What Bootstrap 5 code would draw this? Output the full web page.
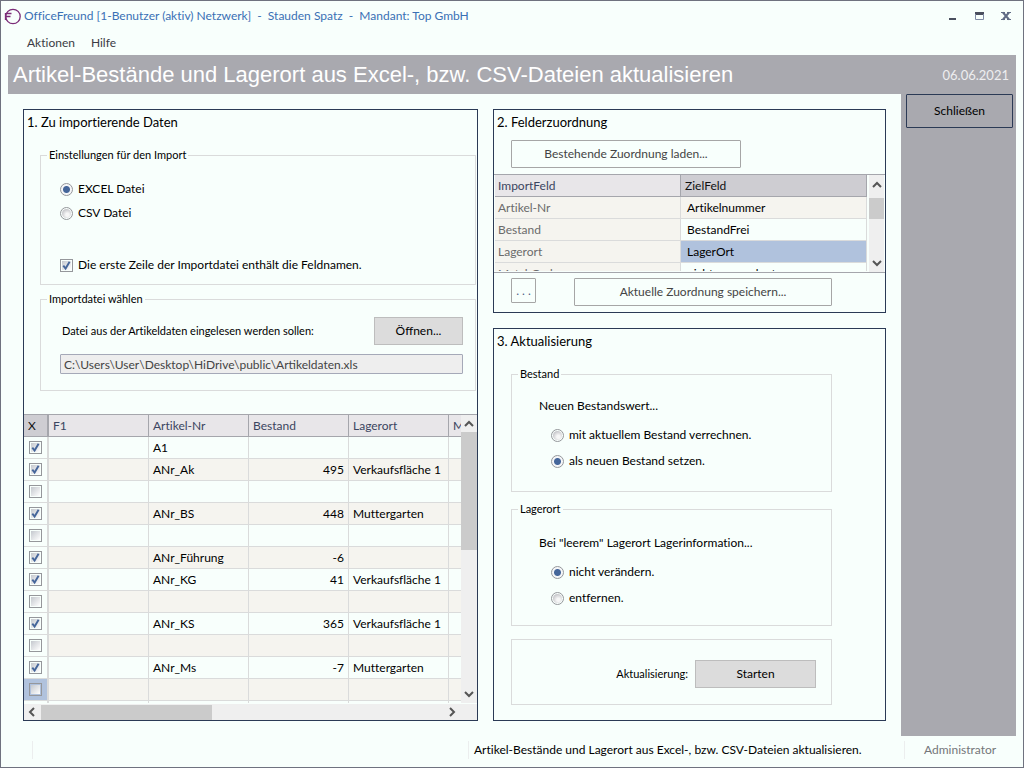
<!DOCTYPE html>
<html lang="de">
<head>
<meta charset="utf-8">
<meta name="viewport" content="width=device-width, initial-scale=1">
<title>OfficeFreund</title>
<link rel="stylesheet" href="https://cdn.jsdelivr.net/npm/bootstrap@5.3.0/dist/css/bootstrap.min.css">
<style>
:root { --paper:#f8fffc; --steel:#a9a9af; --navy:#2b3a55; --line:#dadbdb; --edge:#a5a6ac; --stripe:#f5f4ef; --head:#e8e6e9; --head-on:#cecdd2; --pick:#b0c2dd; }
body { font-family:Lato,"Open Sans","Noto Sans",sans-serif; font-variant-ligatures:none; font-size:12px; line-height:16px; color:#000; background:var(--paper); }
.window { height:100vh; min-height:768px; border:1px solid #6f727f; }
.titlebar { height:30px; padding:0 11px 0 3px; color:#3a70b5; }
.caption-btn { border:0; background:none; padding:0; width:12px; height:12px; line-height:0; }
.menubar { height:24px; padding-left:26px; gap:16px; }
.menubar a { color:#3b3b44; text-decoration:none; }
.banner { height:39px; background:var(--steel); color:#fff; margin:0 7px; padding:0 7px 0 5px; }
.banner h1 { font:22px/24px "Liberation Sans",Arial,sans-serif; margin:0; }
.banner time { color:#eeeef0; font-size:13px; }
.workspace { margin:0 7px; min-height:0; }
.panels { display:grid; grid-template-columns:455fr 393fr; gap:15px; padding:15px; min-width:0; min-height:0; }
.panel { border:1px solid var(--navy); min-width:0; min-height:0; }
.panel h2 { font-size:13px; font-weight:400; line-height:16px; margin:0; padding:4px 3px 0; }
.sidebar { flex:none; width:115px; background:var(--steel); padding:0 3px 0 5px; }
.group { border:1px solid var(--line); }
.group legend { float:none; width:auto; font-size:11px; line-height:16px; margin:0 0 0 6px; padding:0 2px; }
.tight { font-size:11px; }
.win-btn { border:1px solid #a6a6a6; border-radius:1px; background:none; color:#444; height:28px; padding:0; line-height:16px; }
.win-btn.solid { background:#dcdcdc; border-color:#bdbdbd; border-radius:0; color:#000; }
.win-btn.side { border-color:var(--navy); height:34px; color:#000; }
.path-box { height:20px; border:1px solid #a5a9b8; border-radius:1px; background:#eee; color:#444; padding:0 3px; width:100%; }
.opt { display:flex; align-items:center; gap:5px; height:24px; }
.opt.tall { height:26px; padding-left:12px; }
input[type=radio], input[type=checkbox] { appearance:none; width:13px; height:13px; flex:none; margin:0; border:1px solid #95979b; background:linear-gradient(135deg,#c4c8ce,#fff) content-box #f3f3f3; padding:1px; }
input[type=radio] { border-radius:50%; background:radial-gradient(circle at 60% 65%,#f7f7f7 20%,#c4c4c8 75%) content-box #f3f3f3; }
input[type=radio]:checked { background:radial-gradient(circle,#45669a 0 3px,#f5f6f8 4px); }
input[type=checkbox]:checked { background:url("data:image/svg+xml,%3Csvg xmlns='http://www.w3.org/2000/svg' viewBox='0 0 11 11'%3E%3Cpath d='M2.3 5.6L4.6 8.6L8.6 1.8' fill='none' stroke='%2345669a' stroke-width='1.9'/%3E%3C/svg%3E") border-box center/11px no-repeat, linear-gradient(135deg,#c4c8ce,#fff) content-box #f3f3f3; }
.sheet { border-collapse:separate; border-spacing:0; table-layout:fixed; width:100%; }
.sheet th, .sheet td { height:22px; padding:0 4px; border:0 solid var(--line); border-width:0 1px 1px 0; white-space:nowrap; overflow:hidden; line-height:16px; }
.sheet th { font-weight:400; background:var(--head); border-color:var(--edge); color:#3b4560; text-align:left; }
.sheet th.on { background:var(--head-on); color:#111; }
.import-sheet { width:525px; }
.import-sheet tbody tr:nth-child(even) td { background:var(--stripe); }
.import-sheet td:first-child, .import-sheet th:first-child { border-right-width:2px; }
.import-sheet td:first-child { background:var(--paper) !important; line-height:0; padding:0 5px; }
.import-sheet td.picked { background:var(--pick) !important; }
.num { text-align:right; }
.data-area { border-top:1px solid var(--edge); display:grid; grid-template-columns:minmax(0,1fr) 16px; }
.import-area { grid-template-rows:minmax(0,1fr) 17px; flex:1 1 0; min-height:0; margin-top:23px; }
.map-area { grid-template-columns:minmax(0,1fr) 18px; height:99px; border-bottom:1px solid var(--edge); margin-top:6px; padding-left:1px; }
.map-area td:first-child { background:var(--stripe); color:#6b6b6b; padding-left:3px; }
.map-area th:first-child { padding-left:3px; }
.map-area td:last-child { padding-left:6px; }
.vbar, .hbar { background:#efefef; display:flex; align-items:center; }
.vbar { flex-direction:column; }
.hbar { margin-top:1px; }
.vbar svg, .hbar svg { flex:none; }
.thumb { background:#cbcbcb; }
.statusbar { height:31px; margin:0 7px; padding-bottom:4px; }
.statusbar .seg { border-left:1px solid #eceeee; height:18px; line-height:18px; }
</style>
</head>
<body>
<div class="window d-flex flex-column">
  <header class="titlebar d-flex align-items-center">
    <svg width="17" height="17" viewBox="0 0 17 17" fill="none" stroke="#7b2c78" aria-hidden="true"><circle cx="9" cy="8.500" r="7.200" stroke-width="1.300"/><path d="M2 5.500H7.500M1 8.500H6.500M1.500 5V12" stroke-width="1.300"/></svg>
    <span class="me-auto" style="white-space:pre;margin-left:3px">OfficeFreund [1-Benutzer (aktiv) Netzwerk]  -  Stauden Spatz  -  Mandant: Top GmbH</span>
    <div class="d-flex" style="gap:15px">
      <button class="caption-btn" aria-label="Minimieren"><svg width="12" height="12"><path d="M3 9h7" stroke="#4a4f5e" stroke-width="2"/></svg></button>
      <button class="caption-btn" aria-label="Maximieren"><svg width="12" height="12"><path d="M2 3.500h9" stroke="#4a4f5e" stroke-width="3"/><path d="M2.500 4v5.500h8V4" fill="none" stroke="#7f8aa5"/></svg></button>
      <button class="caption-btn" aria-label="Fenster schließen"><svg width="12" height="12"><path d="M3 2.500l6 7M9 2.500l-6 7" stroke="#606b85" stroke-width="2"/><path d="M1 2.500h4M7 2.500h4M1 9.500h4M7 9.500h4" stroke="#606b85"/></svg></button>
    </div>
  </header>
  <nav class="menubar d-flex align-items-center"><a href="#">Aktionen</a><a href="#">Hilfe</a></nav>
  <div class="banner d-flex align-items-center justify-content-between">
    <h1>Artikel-Bestände und Lagerort aus Excel-, bzw. CSV-Dateien aktualisieren</h1>
    <time datetime="2021-06-06">06.06.2021</time>
  </div>

  <div class="workspace d-flex flex-fill">
    <main class="panels flex-fill">
      <section class="panel d-flex flex-column">
        <h2>1. Zu importierende Daten</h2>
        <fieldset class="group" style="margin:17px 1px 0 16px">
          <legend>Einstellungen für den Import</legend>
          <div style="padding:14px 19px 7px">
            <label class="opt"><input type="radio" name="src" checked>EXCEL Datei</label>
            <label class="opt"><input type="radio" name="src">CSV Datei</label>
            <label class="opt" style="margin-top:28px"><input type="checkbox" checked>Die erste Zeile der Importdatei enthält die Feldnamen.</label>
          </div>
        </fieldset>
        <fieldset class="group" style="margin:6px 1px 0 16px">
          <legend>Importdatei wählen</legend>
          <div style="padding:10px 12px 16px 19px">
            <div class="d-flex align-items-center justify-content-between">
              <label for="path" class="tight" style="padding-left:2px">Datei aus der Artikeldaten eingelesen werden sollen:</label>
              <button class="win-btn solid" style="width:89px">Öffnen...</button>
            </div>
            <input id="path" class="path-box d-block" style="margin-top:9px" value="C:\Users\User\Desktop\HiDrive\public\Artikeldaten.xls" readonly>
          </div>
        </fieldset>
        <div class="data-area import-area">
          <div class="overflow-hidden">
            <table class="sheet import-sheet">
              <colgroup><col style="width:25px"><col style="width:100px"><col style="width:100px"><col style="width:100px"><col style="width:100px"><col style="width:100px"></colgroup>
              <thead><tr><th class="on">X</th><th>F1</th><th>Artikel-Nr</th><th>Bestand</th><th>Lagerort</th><th>M</th></tr></thead>
              <tbody>
                <tr><td><input type="checkbox" aria-label="Zeile 1" checked></td><td></td><td>A1</td><td class="num"></td><td></td><td></td></tr>
                <tr><td><input type="checkbox" aria-label="Zeile 2" checked></td><td></td><td>ANr_Ak</td><td class="num">495</td><td>Verkaufsfläche 1</td><td></td></tr>
                <tr><td><input type="checkbox" aria-label="Zeile 3"></td><td></td><td></td><td></td><td></td><td></td></tr>
                <tr><td><input type="checkbox" aria-label="Zeile 4" checked></td><td></td><td>ANr_BS</td><td class="num">448</td><td>Muttergarten</td><td></td></tr>
                <tr><td><input type="checkbox" aria-label="Zeile 5"></td><td></td><td></td><td></td><td></td><td></td></tr>
                <tr><td><input type="checkbox" aria-label="Zeile 6" checked></td><td></td><td>ANr_Führung</td><td class="num">-6</td><td></td><td></td></tr>
                <tr><td><input type="checkbox" aria-label="Zeile 7" checked></td><td></td><td>ANr_KG</td><td class="num">41</td><td>Verkaufsfläche 1</td><td></td></tr>
                <tr><td><input type="checkbox" aria-label="Zeile 8"></td><td></td><td></td><td></td><td></td><td></td></tr>
                <tr><td><input type="checkbox" aria-label="Zeile 9" checked></td><td></td><td>ANr_KS</td><td class="num">365</td><td>Verkaufsfläche 1</td><td></td></tr>
                <tr><td><input type="checkbox" aria-label="Zeile 10"></td><td></td><td></td><td></td><td></td><td></td></tr>
                <tr><td><input type="checkbox" aria-label="Zeile 11" checked></td><td></td><td>ANr_Ms</td><td class="num">-7</td><td>Muttergarten</td><td></td></tr>
                <tr><td class="picked"><input type="checkbox" aria-label="Zeile 12"></td><td></td><td></td><td></td><td></td><td></td></tr>
                <tr><td></td><td></td><td></td><td></td><td></td><td></td></tr>
              </tbody>
            </table>
          </div>
          <div class="vbar">
            <svg width="16" height="17" fill="none" stroke="#555" stroke-width="2"><path d="M4 11l4-4 4 4"/></svg>
            <div class="thumb w-100" style="height:118px"></div>
            <svg class="mt-auto" width="16" height="17" fill="none" stroke="#555" stroke-width="2"><path d="M4 6l4 4 4-4"/></svg>
          </div>
          <div class="hbar">
            <svg width="17" height="16" fill="none" stroke="#555" stroke-width="2"><path d="M10 4l-4 4 4 4"/></svg>
            <div class="thumb" style="width:171px;height:15px"></div>
            <svg class="ms-auto" width="17" height="16" fill="none" stroke="#555" stroke-width="2"><path d="M6 4l4 4-4 4"/></svg>
          </div>
          <div class="hbar"></div>
        </div>
      </section>

      <div class="d-flex flex-column" style="gap:15px;min-width:0">
        <section class="panel" style="padding-bottom:6px">
          <h2>2. Felderzuordnung</h2>
          <button class="win-btn d-block" style="width:230px;margin:10px 0 0 17px">Bestehende Zuordnung laden...</button>
          <div class="data-area map-area">
            <div class="overflow-hidden" style="height:96px">
              <table class="sheet">
                <thead><tr><th>ImportFeld</th><th class="on">ZielFeld</th></tr></thead>
                <tbody>
                  <tr><td>Artikel-Nr</td><td style="background:var(--stripe)">Artikelnummer</td></tr>
                  <tr><td>Bestand</td><td>BestandFrei</td></tr>
                  <tr><td>Lagerort</td><td style="background:var(--pick)">LagerOrt</td></tr>
                  <tr><td>MatchCode</td><td>nicht zugeordnet</td></tr>
                </tbody>
              </table>
            </div>
            <div class="vbar" style="margin:0 1px 0 2px">
              <svg width="15" height="23" fill="none" stroke="#555" stroke-width="2"><path d="M4 12l4-4 4 4"/></svg>
              <div class="thumb w-100" style="height:21px"></div>
              <svg class="mt-auto" width="15" height="17" fill="none" stroke="#555" stroke-width="2"><path d="M4 6l4 4 4-4"/></svg>
            </div>
          </div>
          <div class="d-flex" style="padding:5px 53px 0 17px">
            <button class="win-btn" style="width:25px;height:25px;color:#4d6185">. . .</button>
            <button class="win-btn ms-auto" style="width:258px">Aktuelle Zuordnung speichern...</button>
          </div>
        </section>

        <section class="panel flex-fill">
          <h2>3. Aktualisierung</h2>
          <fieldset class="group" style="margin:17px 53px 0 17px">
            <legend>Bestand</legend>
            <div style="padding:16px 27px 17px">
              <div class="mb-2">Neuen Bestandswert...</div>
              <label class="opt tall"><input type="radio" name="stock">mit aktuellem Bestand verrechnen.</label>
              <label class="opt tall"><input type="radio" name="stock" checked>als neuen Bestand setzen.</label>
            </div>
          </fieldset>
          <fieldset class="group" style="margin:9px 53px 0 17px">
            <legend>Lagerort</legend>
            <div style="padding:18px 27px 14px">
              <div class="mb-2">Bei "leerem" Lagerort Lagerinformation...</div>
              <label class="opt tall"><input type="radio" name="place" checked>nicht verändern.</label>
              <label class="opt tall"><input type="radio" name="place">entfernen.</label>
            </div>
          </fieldset>
          <div class="group d-flex align-items-center justify-content-end" style="margin:13px 53px 0 17px;padding:20px 15px 16px">
            <span class="tight" style="margin-right:7px">Aktualisierung:</span>
            <button class="win-btn solid" style="width:121px">Starten</button>
          </div>
        </section>
      </div>
    </main>
    <aside class="sidebar"><button class="win-btn side w-100">Schließen</button></aside>
  </div>

  <footer class="statusbar d-flex align-items-center">
    <div class="seg" style="margin-left:24px;width:436px"></div>
    <div class="seg flex-fill" style="padding-left:5px">Artikel-Bestände und Lagerort aus Excel-, bzw. CSV-Dateien aktualisieren.</div>
    <div class="seg" style="width:112px;padding-left:19px;color:#74767a">Administrator</div>
  </footer>
</div>
<script src="https://cdn.jsdelivr.net/npm/bootstrap@5.3.0/dist/js/bootstrap.bundle.min.js"></script>
</body>
</html>
